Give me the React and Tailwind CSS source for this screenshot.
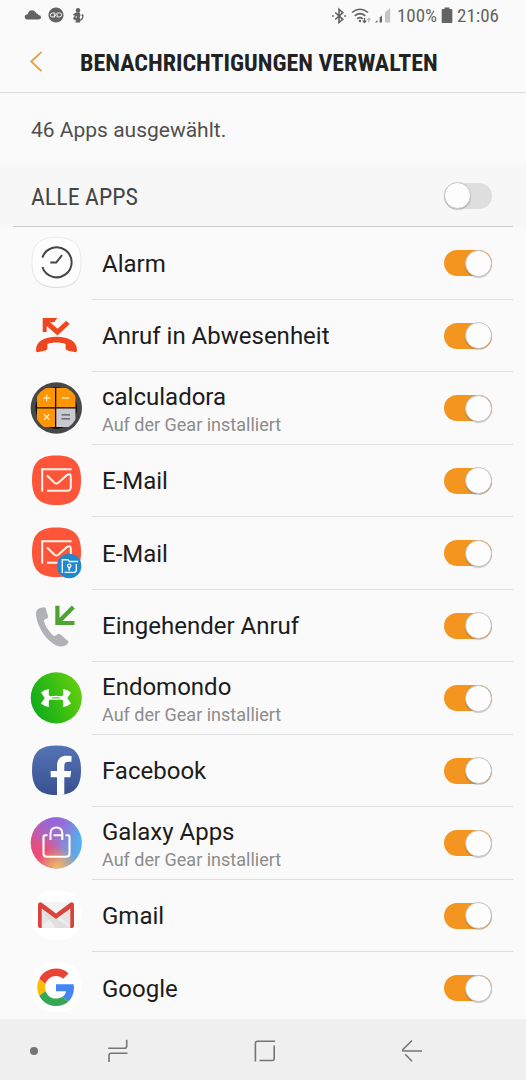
import React from "react";

const SQUIRCLE = "M26.500 .5C44 .5 51 7.500 51 25S44 50 26.500 50 2 42.500 2 25 9 .5 26.500 .5z";

function Icon({ children }) {
  return (
    <svg viewBox="0 0 52 52" className="size-13 shrink-0" fill="none" aria-hidden="true">
      {children}
    </svg>
  );
}

function AlarmIcon() {
  return (
    <Icon>
      <path d={SQUIRCLE} fill="#d2d2d2" transform="translate(0 .7)" />
      <path d={SQUIRCLE} fill="#fdfdfd" stroke="#e6e6e6" strokeWidth=".8" />
      <path d="M12.400 20.600A15 15 0 1 1 12.400 30M20.300 25.600H26.200L32 18.200" stroke="#454547" strokeWidth="2" />
    </Icon>
  );
}

function MissedCallIcon() {
  return (
    <Icon>
      <path d="M12.700 8H27.300L24.200 12.200H20L27.500 18.800 36.200 10.800 39.600 14 27.500 25.600 16.700 16V22H12.700z" fill="#ee471f" />
      <path d="M6 40C6 31.500 14 26.700 26.500 26.700S47 31.500 47 40C47 42 46 42.400 44.500 42L37.500 40.400C36 40 35.600 39.500 35.600 38V34C31 32 22 32 17.400 34V38C17.400 39.500 17 40 15.500 40.400L8.500 42C7 42.400 6 42 6 40z" fill="#ee471f" />
    </Icon>
  );
}

function CalculatorIcon() {
  return (
    <Icon>
      <circle cx="26.300" cy="26" r="25.700" fill="#474747" />
      <circle cx="26.300" cy="26" r="20.700" fill="#0b0906" />
      <clipPath id="calc-face"><circle cx="26.300" cy="26" r="22.500" /></clipPath>
      <g clipPath="url(#calc-face)">
        <path d="M7 6H25V25.200H7zM26.300 6H45.500V25.200H26.300zM7 26.400H25V45H7z" fill="#ff9500" />
        <path d="M26.300 26.400H45.500V45H26.300z" fill="#c9cad0" />
      </g>
      <path d="M13.300 16H20M16.600 12.700V19.300M32 16H39M13.900 32.300L19.300 37.700M19.300 32.300L13.900 37.700" stroke="#ffe9c4" strokeWidth="1.300" />
      <path d="M31.500 32.800H40M31.500 36.800H40" stroke="#55555b" strokeWidth="1.300" />
    </Icon>
  );
}

function MailShape() {
  return (
    <>
      <path d={SQUIRCLE} fill="#fd5539" />
      <path d="M12.200 36.600V14.200H41.700" stroke="#fff3ec" strokeWidth="2" />
      <path d="M17 20.500L24.500 27.700Q26.400 29.300 28.300 27.700L36.500 20.400Q40.800 17.300 40.800 22V32Q40.800 35.700 37 35.700H17" stroke="#fff3ec" strokeWidth="2" />
    </>
  );
}

function MailIcon() {
  return (
    <Icon>
      <MailShape />
    </Icon>
  );
}

function SecureMailIcon() {
  return (
    <Icon>
      <MailShape />
      <circle cx="39.200" cy="39" r="12.200" fill="#2088cd" />
      <path d="M32.300 46V32.800H38L39.300 34.500H48M34.500 45.400H44Q46.300 45.400 46.300 43V37" stroke="#e8f6ff" strokeWidth="1.400" />
      <path d="M39.300 40V43.500" stroke="#fff" strokeWidth="1.600" />
      <circle cx="39.300" cy="38.700" r="1.700" stroke="#fff" strokeWidth="1.200" />
    </Icon>
  );
}

function IncomingCallIcon() {
  return (
    <Icon>
      <path d="M6 13.500C6 9.500 9.500 7.600 14.300 7.300Q15.400 7.300 15.700 8.400L18 16.300Q18.300 17.600 17.200 18.200L13.800 20.200C14.700 25.500 19.500 32.500 24.200 36.300L28.200 34Q29.200 33.400 30.100 34.200L38 41Q39 42 38.200 43C36 46 31 47.600 26.500 45.500C16 40.500 6.500 26 6 13.500z" fill="#afb1b4" />
      <path d="M27.400 5.700V23H44.500M28 22.400L43.300 7.100" stroke="#4ca32f" strokeWidth="4.200" />
    </Icon>
  );
}

function EndomondoIcon() {
  return (
    <Icon>
      <defs>
        <linearGradient id="endo" x1="0" y1=".7" x2="1" y2=".3">
          <stop offset="0" stopColor="#0cab1b" />
          <stop offset="1" stopColor="#63d00c" />
        </linearGradient>
      </defs>
      <circle cx="26.300" cy="25.800" r="25.600" fill="url(#endo)" />
      <path d="M18.800 16.900V23L20 24.200Q26 23.400 32 24.200L33.200 23V16.900Q37.800 17.600 41 20.500L37.300 25.900 41 31.400Q37.800 34.300 33.200 35V28.800L32 27.600Q26 28.400 20 27.600L18.800 28.800V35Q14.200 34.300 11 31.400L14.700 25.900 11 20.500Q14.200 17.600 18.800 16.900z" fill="#fff" />
      <path d="M21.800 25.900Q26 25 30.200 25.900Q26 26.800 21.800 25.900z" fill="#3cbd18" stroke="#3cbd18" strokeWidth=".4" />
    </Icon>
  );
}

function FacebookIcon() {
  return (
    <Icon>
      <defs>
        <linearGradient id="fb" x1="0" y1="0" x2="0" y2="1">
          <stop offset="0" stopColor="#5474b6" />
          <stop offset="1" stopColor="#38508f" />
        </linearGradient>
      </defs>
      <path d={SQUIRCLE} fill="url(#fb)" />
      <path d="M27 50V32.300H20.700V26H27V21.300C27 14 30.500 10.700 36.700 10.700Q40 10.700 41.500 11.100V16.800H38Q34.300 16.800 34.300 20.600V26H41.200L40.300 32.300H34.300V49.500Q31 50 27 50z" fill="#fff" />
    </Icon>
  );
}

function GalaxyAppsIcon() {
  return (
    <Icon>
      <defs>
        <linearGradient id="ga-base" x1="0" y1=".5" x2="1" y2=".5">
          <stop offset="0" stopColor="#dc4e91" />
          <stop offset=".5" stopColor="#a278c8" />
          <stop offset="1" stopColor="#4bb5f2" />
        </linearGradient>
        <radialGradient id="ga-top" cx=".45" cy="0" r=".6">
          <stop offset="0" stopColor="#9563dc" />
          <stop offset="1" stopColor="#9563dc" stopOpacity="0" />
        </radialGradient>
        <radialGradient id="ga-red" cx=".25" cy=".72" r=".4">
          <stop offset="0" stopColor="#f84868" />
          <stop offset="1" stopColor="#f84868" stopOpacity="0" />
        </radialGradient>
        <radialGradient id="ga-yellow" cx=".52" cy="1" r=".42">
          <stop offset="0" stopColor="#f9bd55" />
          <stop offset="1" stopColor="#f9bd55" stopOpacity="0" />
        </radialGradient>
      </defs>
      <circle cx="26.300" cy="25.800" r="25.600" fill="url(#ga-base)" />
      <circle cx="26.300" cy="25.800" r="25.600" fill="url(#ga-top)" />
      <circle cx="26.300" cy="25.800" r="25.600" fill="url(#ga-red)" />
      <circle cx="26.300" cy="25.800" r="25.600" fill="url(#ga-yellow)" />
      <path d="M17.500 18.200H15Q13.500 18.200 13.500 19.700V36.500Q13.500 39.700 16.700 39.700H36.300Q39.500 39.700 39.500 36.500V19.700Q39.500 18.200 38 18.200H35.500M20.500 23V16.300C20.500 8.500 32.300 8.500 32.300 16.300V23M23.500 18.200H32.300" stroke="#fff" strokeWidth="2.100" />
    </Icon>
  );
}

function GmailIcon() {
  return (
    <Icon>
      <path d={SQUIRCLE} fill="#fff" />
      <path d="M10 12.500H42V38H10z" fill="#e4e4e4" />
      <path d="M11 37.700L23 25.500 26 27.800 29 25.500 41 37.700z" fill="#efefef" />
      <path d="M10 12.500H42L26 25z" fill="#f3f3f3" />
      <path d="M11.700 20L41 38H26z" fill="#d2d2d2" opacity=".5" />
      <path d="M8 15Q8 12.300 10.500 12.300L12 12.900 26 23.500 40 12.900 41.500 12.300Q44 12.300 44 15V36Q44 38 42 38H40.300V18.500L26 29 11.700 18.500V38H10Q8 38 8 36z" fill="#d9433b" />
    </Icon>
  );
}

function GoogleIcon() {
  return (
    <Icon>
      <path d={SQUIRCLE} fill="#fff" />
      <g transform="translate(7.300 6.600) scale(.78)">
        <path fill="#ea4335" d="M24 9.500c3.540 0 6.710 1.220 9.210 3.600l6.850-6.850C35.900 2.380 30.470 0 24 0 14.620 0 6.510 5.380 2.560 13.220l7.980 6.190C12.430 13.720 17.740 9.500 24 9.500z" />
        <path fill="#4285f4" d="M46.980 24.550c0-1.570-.15-3.090-.38-4.550H24v9.020h12.940c-.58 2.960-2.260 5.480-4.780 7.180l7.730 6c4.510-4.180 7.090-10.360 7.090-17.650z" />
        <path fill="#fbbc05" d="M10.530 28.590c-.48-1.450-.76-2.990-.76-4.590s.27-3.140.76-4.590l-7.980-6.190C.92 16.460 0 20.120 0 24c0 3.880.92 7.540 2.560 10.780l7.970-6.190z" />
        <path fill="#34a853" d="M24 48c6.480 0 11.930-2.130 15.890-5.810l-7.730-6c-2.150 1.450-4.920 2.300-8.160 2.300-6.260 0-11.570-4.220-13.470-9.910l-7.980 6.190C6.510 42.620 14.620 48 24 48z" />
      </g>
    </Icon>
  );
}

const APPS = [
  { id: "alarm", name: "Alarm", icon: AlarmIcon },
  { id: "missed", name: "Anruf in Abwesenheit", icon: MissedCallIcon },
  { id: "calculadora", name: "calculadora", note: "Auf der Gear installiert", icon: CalculatorIcon },
  { id: "mail", name: "E-Mail", icon: MailIcon },
  { id: "secure-mail", name: "E-Mail", icon: SecureMailIcon },
  { id: "incoming", name: "Eingehender Anruf", icon: IncomingCallIcon },
  { id: "endomondo", name: "Endomondo", note: "Auf der Gear installiert", icon: EndomondoIcon },
  { id: "facebook", name: "Facebook", icon: FacebookIcon },
  { id: "galaxy-apps", name: "Galaxy Apps", note: "Auf der Gear installiert", icon: GalaxyAppsIcon },
  { id: "gmail", name: "Gmail", icon: GmailIcon },
  { id: "google", name: "Google", icon: GoogleIcon },
];

function Toggle({ id, defaultChecked }) {
  return (
    <input
      id={id}
      type="checkbox"
      role="switch"
      defaultChecked={defaultChecked}
      className="flex h-[26px] w-12 shrink-0 cursor-pointer appearance-none items-center rounded-full bg-[#dedede] before:size-[27px] before:shrink-0 before:rounded-full before:border before:border-[#c4c4c4] before:bg-[#fdfdfd] before:shadow-[0_1px_1px_rgba(0,0,0,0.2)] checked:justify-end checked:bg-[#f3951f]"
    />
  );
}

function AppRow({ app }) {
  const AppIcon = app.icon;
  return (
    <li className="flex shrink-0 items-stretch gap-2.5 pr-[13px] pl-[30px] odd:h-[73px] even:h-[72px]">
      <div className="flex items-center border-b border-transparent">
        <AppIcon />
      </div>
      <div className="flex min-w-0 flex-1 items-center border-b border-[#dfdfdf] pr-[21px] pl-2.5">
        <label htmlFor={app.id} className="min-w-0 flex-1 cursor-pointer pt-px">
          <span className="block text-2xl leading-8 text-[#1c1c1c]">{app.name}</span>
          {app.note && <span className="block text-lg leading-6 text-[#8c8c8c]">{app.note}</span>}
        </label>
        <Toggle id={app.id} defaultChecked />
      </div>
    </li>
  );
}

function StatusBar() {
  return (
    <div className="flex h-8 shrink-0 items-center justify-between pr-[27px] pl-6 text-[#636363]">
      <div className="flex items-center gap-[5px] pb-0.5">
        <svg viewBox="0 0 18 16" className="h-4 w-[18px]" fill="currentColor" aria-hidden="true">
          <path d="M4 12.500C1.600 12.500.7 11.300.7 9.900S2 7.300 3.700 7.300C4.300 4.700 6 3.300 8 3.300c2.200 0 3.700 1.300 4.300 3.300 1 0 1.700.4 2.100 1.300 1.700.2 2.600 1.100 2.600 2.300 0 1.300-1 2.300-2.600 2.300z" />
        </svg>
        <svg viewBox="0 0 18 16" className="h-4 w-[18px]" fill="none" aria-hidden="true">
          <circle cx="9" cy="8" r="7.600" fill="currentColor" />
          <path d="M8 9.900H4.800Q3.300 9.900 3.300 8.200T5.300 6H8L7.300 9.900L10.300 6H12.800Q14.700 6 14.700 7.800T12.800 9.900H9.900L10.400 7.500" stroke="#f3f3f3" strokeWidth="1" />
        </svg>
        <svg viewBox="0 0 16 16" className="size-4" fill="currentColor" aria-hidden="true">
          <circle cx="8" cy="3.200" r="2.200" />
          <path d="M6.500 5.200H9.600L10.500 8 9.600 10.800 10.300 12 10 15.500H5.500L5.700 12.700Q3 13.300 3.100 11.300L5 8.600 3 8.200 3.400 7z" />
          <path d="M9.200 13.500Q12.800 13 13 8.200M11.500 8.500L13.300 7.600" stroke="currentColor" strokeWidth="1.300" fill="none" />
          <circle cx="6.300" cy="10" r=".8" fill="#fafafa" />
        </svg>
      </div>
      <div className="flex items-center gap-1 font-['Roboto_Condensed',Roboto,sans-serif] text-[19px] leading-6">
        <svg viewBox="0 0 16 18" className="h-[18px] w-4" fill="none" stroke="currentColor" strokeWidth="1.600" aria-hidden="true">
          <path d="M4.200 5.500L11.800 12.300 8 15.600V2.200L11.800 5.700 4.200 12.500" />
          <path d="M1 9H2.800M13.200 9H15" />
        </svg>
        <svg viewBox="0 0 20 18" className="h-[18px] w-5" fill="none" stroke="currentColor" strokeWidth="1.600" aria-hidden="true">
          <path d="M1 5.500Q9 -1 17 5.500M3.700 8.800Q9 4.300 14.300 8.800M6.200 11.800Q9 9.300 11.800 11.800" />
          <circle cx="9" cy="14" r="1.200" fill="currentColor" stroke="none" />
          <path d="M13.500 11V15M11.700 13.600L13.500 15.600 15.300 13.600" strokeWidth="1.300" />
          <path d="M17.800 15.500V11.500M16.200 13L17.800 11.200 19.400 13" stroke="#bcbcbc" strokeWidth="1.200" />
        </svg>
        <svg viewBox="0 0 16 18" className="h-[18px] w-4" aria-hidden="true">
          <path d="M10 5.500L15.200 1V15.500H10z" fill="#c4c4c4" />
          <path d="M0 15.500L2.500 13V15.500zM4.600 10.500L7 8.500V15.500H4.600z" fill="currentColor" />
        </svg>
        <span className="pl-0.5">100%</span>
        <svg viewBox="0 0 12 18" className="h-[18px] w-3" fill="currentColor" aria-hidden="true">
          <path d="M3.500 .5H8.500V2H10.300Q11.300 2 11.300 3V15Q11.300 16 10.300 16H1.700Q.7 16 .7 15V3Q.7 2 1.700 2H3.500z" />
        </svg>
        <span>21:06</span>
      </div>
    </div>
  );
}

function NavBar() {
  return (
    <nav className="flex h-[61px] shrink-0 items-stretch bg-[#efefef] pt-0.5 pr-10 pl-6 text-[#757575]">
      <button type="button" aria-label="Navigationsleiste ausblenden" className="flex w-5 items-center justify-center">
        <svg viewBox="0 0 8 8" className="size-2" fill="currentColor"><circle cx="4" cy="4" r="4" /></svg>
      </button>
      <button type="button" aria-label="Letzte Apps" className="flex flex-1 items-center justify-center">
        <svg viewBox="0 0 24 24" className="size-6" fill="none" stroke="currentColor" strokeWidth="1.600">
          <path d="M2.200 9.300H18.500Q20.700 9.300 20.700 7V.8M3 23V16.500Q3 14.300 5.200 14.300H21.500" />
        </svg>
      </button>
      <button type="button" aria-label="Startseite" className="flex flex-1 items-center justify-center">
        <svg viewBox="0 0 24 24" className="size-6" fill="none" stroke="currentColor" strokeWidth="1.600">
          <path d="M2.400 22.500V4.500Q2.400 2.300 4.600 2.300H22M21.200 6.500V19.500Q21.200 21.500 19 21.500H6.500" />
        </svg>
      </button>
      <button type="button" aria-label="Zurück" className="flex flex-1 items-center justify-center">
        <svg viewBox="0 0 24 24" className="size-6" fill="none" stroke="currentColor" strokeWidth="1.600">
          <path d="M12 1.500L3.200 10.300Q1.700 12 4 12H22M5.200 15.300L12 22.300" />
        </svg>
      </button>
    </nav>
  );
}

export default function App() {
  return (
    <div className="flex h-screen flex-col bg-[#fafafa] font-[Roboto,sans-serif]">
      <StatusBar />
      <header className="flex h-[61px] shrink-0 items-center gap-8 border-b border-[#dcdcdc] pl-6">
        <button type="button" aria-label="Zurück" className="flex size-6 items-center justify-center text-[#e9a03b]">
          <svg viewBox="0 0 24 24" className="size-6" fill="none" stroke="currentColor" strokeWidth="1.800">
            <path d="M17.500 1.800L7.200 11.500 17.500 21.200" />
          </svg>
        </button>
        <h1 className="pt-0.5 font-['Roboto_Condensed',Roboto,sans-serif] text-2xl font-bold whitespace-nowrap text-[#222222]">
          BENACHRICHTIGUNGEN VERWALTEN
        </h1>
      </header>
      <main className="flex min-h-0 flex-1 flex-col overflow-y-auto [scrollbar-width:none]">
        <p className="flex h-[72px] shrink-0 items-center px-[31px] pt-1 text-[21px] text-[#4f4f4f]">46 Apps ausgewählt.</p>
        <div className="shrink-0 bg-[#f7f7f7] px-[13px]">
          <div className="flex h-[62px] items-center border-b border-[#cccccc] pr-[21px] pl-[18px]">
            <label
              htmlFor="all-apps"
              className="flex-1 cursor-pointer pt-0.5 font-['Roboto_Condensed',Roboto,sans-serif] text-2xl text-[#454545]"
            >
              ALLE APPS
            </label>
            <Toggle id="all-apps" />
          </div>
        </div>
        <ul className="flex flex-col">
          {APPS.map((app) => (
            <AppRow key={app.id} app={app} />
          ))}
        </ul>
      </main>
      <NavBar />
    </div>
  );
}
